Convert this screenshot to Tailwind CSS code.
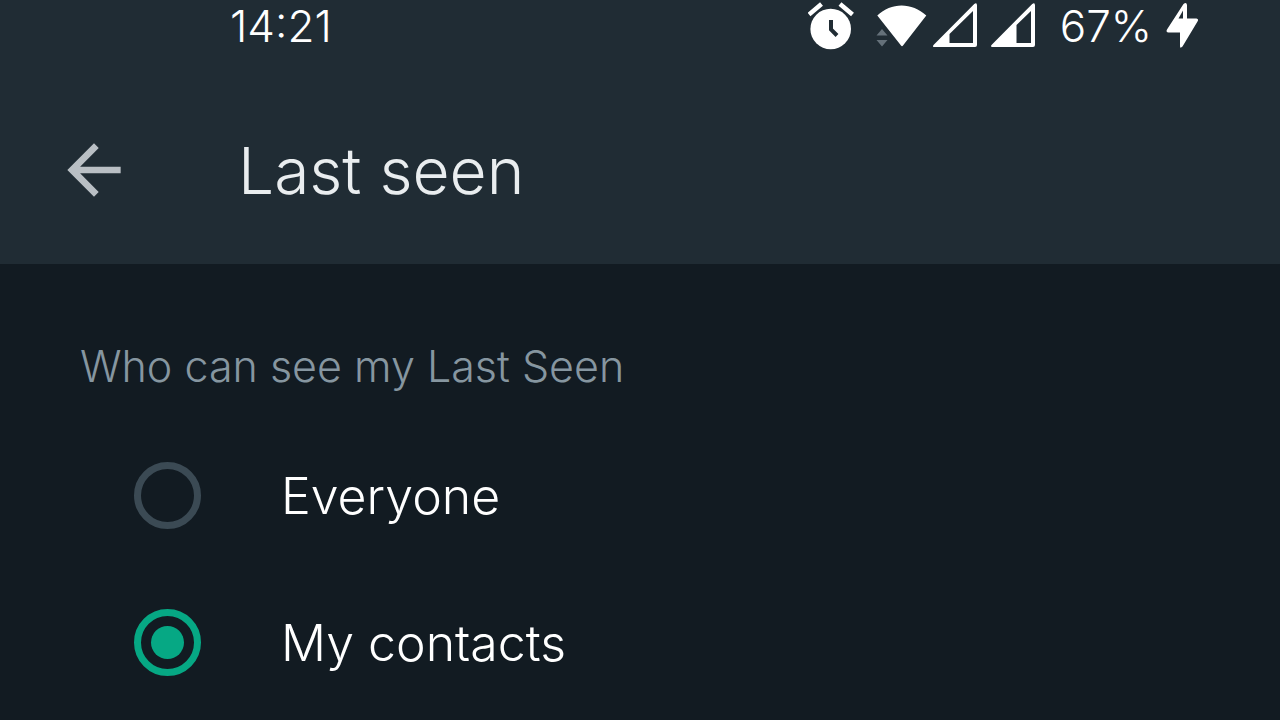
<!DOCTYPE html>
<html lang="en">
<head>
  <meta charset="UTF-8" />
  <meta name="viewport" content="width=device-width, initial-scale=1.0" />
  <title>Last seen</title>
  <script src="https://cdn.jsdelivr.net/npm/@tailwindcss/browser@4"></script>
</head>
<body class="bg-[#121b22] text-white font-['Inter','Liberation_Sans',sans-serif] font-light min-h-screen overflow-hidden">

  <!-- Header -->
  <header class="bg-[#202c34]">

    <!-- Status bar -->
    <div class="flex items-center justify-between h-[52px] pl-[230px] pr-20 text-[44px] leading-[52px]">
      <span>14:21</span>
      <div class="flex items-center">
        <!-- Alarm -->
        <svg class="w-12 h-[52px] mr-5" viewBox="0 0 48 52" fill="none">
          <circle cx="22.700" cy="29" r="20.300" fill="#fff" />
          <path d="M1 14.500 13.500 4M32 4l12.500 10.500" stroke="#fff" stroke-width="4.500" />
          <path d="M23 20v9.500l6 6" stroke="#202c34" stroke-width="4" />
        </svg>
        <!-- Wifi -->
        <svg class="w-[52px] h-[52px] mr-1" viewBox="0 0 52 52">
          <path d="M1.300 15.500C15 2 36 2 50.300 15.500L27 45.500Q26 47 25 45.500Z" fill="#fff" />
          <path d="M.5 35.500 6 29l5.500 6.500ZM.5 40h11L6 46.500Z" fill="#65717a" />
        </svg>
        <!-- Signal 1 -->
        <svg class="w-[46px] h-[52px] mr-3" viewBox="0 0 46 52">
          <path fill="#fff" fill-rule="evenodd" d="M1.500 45 42 4.200Q45 2 45 5.500V45Q45 47 43 47H2.500Q0 47 1.500 45ZM17.500 34v9H41V11Z" />
        </svg>
        <!-- Signal 2 -->
        <svg class="w-[46px] h-[52px] mr-6" viewBox="0 0 46 52">
          <path fill="#fff" fill-rule="evenodd" d="M1.500 45 42 4.200Q45 2 45 5.500V45Q45 47 43 47H2.500Q0 47 1.500 45ZM26.500 25v18H41V11Z" />
        </svg>
        <span>67%</span>
        <!-- Charging -->
        <svg class="w-9 h-[52px] ml-3" viewBox="0 0 36 52">
          <path fill="#fff" fill-rule="evenodd" d="M19.500 4Q22.500 1.500 23 5v13.500h9.500Q35 19 33.500 21.500L18.500 46.500Q16 49 16 46V32.500H4.500Q1.500 32 3 29.500ZM19 10.500 14.500 18.500H19Z" />
        </svg>
      </div>
    </div>

    <!-- App bar -->
    <div class="flex items-center h-[212px] pt-6 pl-[54px]">
      <button type="button" aria-label="Back" class="text-[#b9bfc4]">
        <svg class="w-20 h-20" viewBox="0 0 24 24" fill="currentColor">
          <path d="M20 11H7.830l5.590-5.590L12 4l-8 8 8 8 1.410-1.410L7.830 13H20v-2z" />
        </svg>
      </button>
      <h1 class="ml-[104px] pt-0.5 text-[64px] leading-20 text-[#e9edef]">Last seen</h1>
    </div>
  </header>

  <!-- Options -->
  <fieldset>
    <legend class="pt-[72px] pb-[26px] pl-20 text-[43px] leading-[60px] text-[#8696a0]">Who can see my Last Seen</legend>
    <label class="flex items-center h-[147px] pl-[134px] text-[50px] leading-[64px]">
      <input type="radio" name="last_seen" value="everyone" class="appearance-none size-[67px] mr-20 rounded-full border-[7px] border-[#3b4a54] checked:border-[#06a884] grid place-content-center before:size-[33px] before:rounded-full checked:before:bg-[#06a884]" />
      Everyone
    </label>
    <label class="flex items-center h-[147px] pl-[134px] text-[50px] leading-[64px]">
      <input type="radio" name="last_seen" value="contacts" checked class="appearance-none size-[67px] mr-20 rounded-full border-[7px] border-[#3b4a54] checked:border-[#06a884] grid place-content-center before:size-[33px] before:rounded-full checked:before:bg-[#06a884]" />
      My contacts
    </label>
  </fieldset>

</body>
</html>
